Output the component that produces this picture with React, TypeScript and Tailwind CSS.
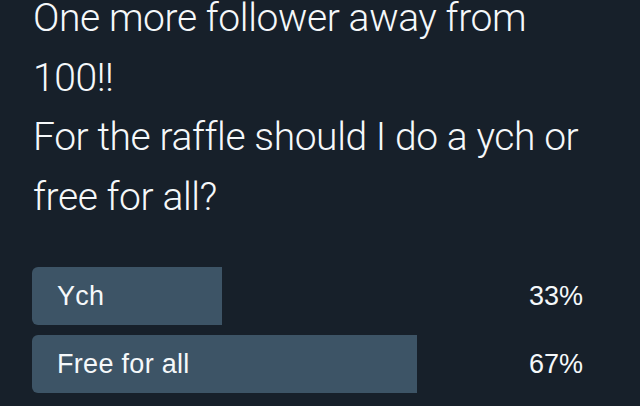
const options = [
  { label: "Ych", percent: 33, width: "w-[190px]" },
  { label: "Free for all", percent: 67, width: "w-[385px]" },
];

export default function App() {
  return (
    <div
      className="h-[406px] w-[640px] overflow-hidden bg-[#17202a] text-[#f5f8fa]"
      style={{ fontFamily: "Roboto, 'Liberation Sans', sans-serif" }}
    >
      <p className="mt-[-11px] pl-[33px] pr-4 text-[39px] font-light leading-[59.5px] tracking-[-0.4px]">
        One more follower away from
        <br />
        100!!
        <br />
        For the raffle should I do a ych or
        <br />
        free for all?
      </p>

      <div
        className="mt-10 flex flex-col gap-[10px] pl-8 pr-[57px]"
        style={{ fontFamily: "'Liberation Sans', Arial, sans-serif" }}
      >
        {options.map((opt) => (
          <div key={opt.label} className="relative flex h-[58px] items-center">
            <div className={`absolute inset-y-0 left-0 rounded-l-md bg-[#3d5466] ${opt.width}`} />
            <span className="relative pl-[25px] text-[27px] tracking-[0.3px]">{opt.label}</span>
            <span className="relative ml-auto text-[27px]">{opt.percent}%</span>
          </div>
        ))}
      </div>
    </div>
  );
}
